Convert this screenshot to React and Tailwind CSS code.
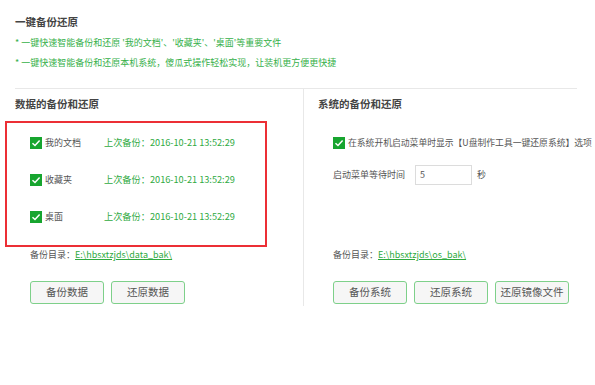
import React from "react";

const rows = ["我的文档", "收藏夹", "桌面"];

function Check() {
  return (
    <span className="flex h-[12px] w-[12px] shrink-0 items-center justify-center bg-[#17a52f]">
      <svg width="10" height="10" viewBox="0 0 10 10" fill="none">
        <path d="M1.5 5.2 L4 7.5 L8.6 2.6" stroke="#fff" strokeWidth="1.5" />
      </svg>
    </span>
  );
}

function Btn({ children }) {
  return (
    <button className="h-[23px] w-[74px] shrink-0 rounded-[3px] border-[1.5px] border-[#7ed08a] bg-[#f6f6f6] text-[10.5px] leading-none text-[#555]">
      {children}
    </button>
  );
}

export default function App() {
  return (
    <div
      className="h-[385px] w-[595px] overflow-hidden bg-white text-[#555]"
      style={{ fontFamily: '"Noto Sans CJK SC", "Noto Sans", sans-serif' }}
    >
      {/* HEADER */}
      <div className="pl-[15px] pt-[15px]">
        <div className="text-[10.5px] font-bold leading-[14px] text-[#444]">一键备份还原</div>
        <div className="mt-[8px] text-[9px] leading-[12px] text-[#36b04a]">
          * 一键快速智能备份和还原 '我的文档'、'收藏夹'、'桌面'等重要文件
        </div>
        <div className="mt-[8px] text-[9px] leading-[12px] text-[#36b04a]">
          * 一键快速智能备份和还原本机系统，傻瓜式操作轻松实现，让装机更方便更快捷
        </div>
      </div>

      {/* COLUMNS */}
      <div className="ml-[15px] mt-[19px] flex w-[562px] border-t border-[#e8e8e8]">
        {/* LEFT */}
        <div className="w-[288px] shrink-0 pt-[8px]">
          <div className="text-[10.5px] font-bold leading-[14px] text-[#444]">数据的备份和还原</div>
          <div className="-ml-[10px] mt-[10px] flex h-[126px] w-[262px] flex-col gap-[23px] border-2 border-[#ec2f35] pl-[23px] pt-[13px]">
            {rows.map((r) => (
              <div key={r} className="flex h-[14px] items-center text-[9px]">
                <Check />
                <span className="ml-[3px] w-[59px] text-[#555]">{r}</span>
                <span className="text-[9.2px] text-[#2faa3f]">上次备份：2016-10-21 13:52:29</span>
              </div>
            ))}
          </div>
          <div className="mt-[1px] pl-[15px] text-[9px] leading-[14px]">
            备份目录：<span className="text-[#2faa3f] underline">E:\hbsxtzjds\data_bak\</span>
          </div>
          <div className="mt-[19px] flex gap-[7px] pl-[15px]">
            <Btn>备份数据</Btn>
            <Btn>还原数据</Btn>
          </div>
        </div>

        {/* RIGHT */}
        <div className="min-w-0 flex-1 border-l border-[#e8e8e8] pb-[2px] pl-[14px] pt-[8px]">
          <div className="text-[10.5px] font-bold leading-[14px] text-[#444]">系统的备份和还原</div>
          <div className="ml-[15px] mt-[25px] flex h-[14px] items-center whitespace-nowrap text-[8.8px]">
            <Check />
            <span className="ml-[3px]">在系统开机启动菜单时显示【U盘制作工具一键还原系统】选项</span>
          </div>
          <div className="ml-[15px] mt-[15px] flex items-center text-[9px]">
            <span className="w-[82px]">启动菜单等待时间</span>
            <div className="flex h-[20px] w-[57px] items-center border border-[#dcdcdc] pl-[4px] text-[#555]">5</div>
            <span className="ml-[5px]">秒</span>
          </div>
          <div className="ml-[15px] mt-[63px] text-[9px] leading-[14px]">
            备份目录：<span className="text-[#2faa3f] underline">E:\hbsxtzjds\os_bak\</span>
          </div>
          <div className="ml-[15px] mt-[19px] flex gap-[7px]">
            <Btn>备份系统</Btn>
            <Btn>还原系统</Btn>
            <Btn>还原镜像文件</Btn>
          </div>
        </div>
      </div>
    </div>
  );
}
